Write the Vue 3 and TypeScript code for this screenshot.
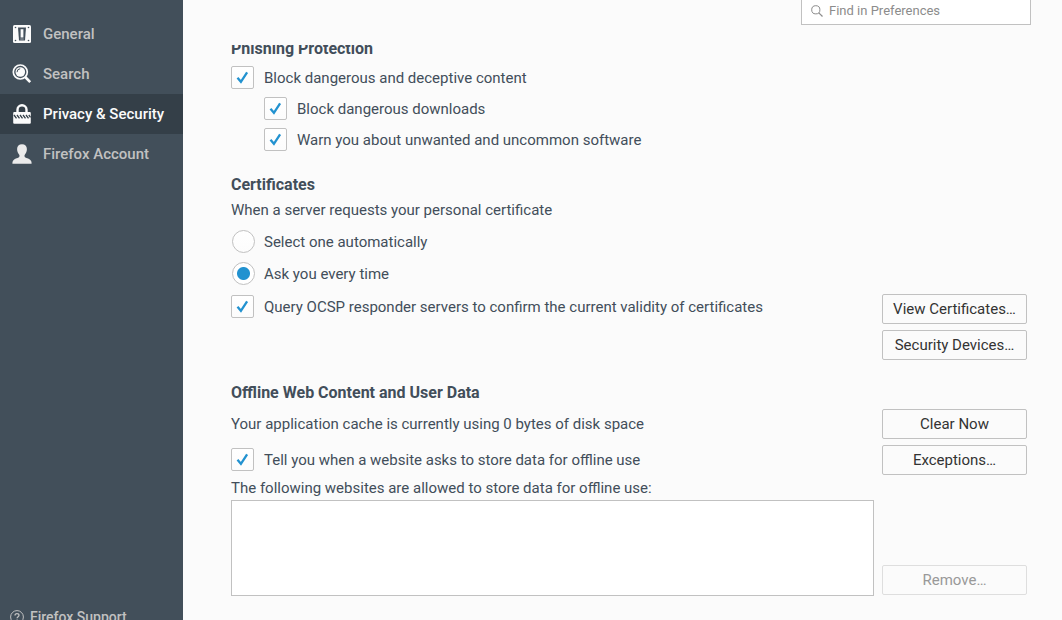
<script setup lang="ts">
import { ref } from 'vue'

const categories = [
  { id: 'general', label: 'General' },
  { id: 'search', label: 'Search' },
  { id: 'privacy', label: 'Privacy & Security' },
  { id: 'account', label: 'Firefox Account' },
]
const current = ref('privacy')
const query = ref('')
const blockContent = ref(true)
const blockDownloads = ref(true)
const warnSoftware = ref(true)
const certificateChoice = ref('ask')
const queryOcsp = ref(true)
const notifyOffline = ref(true)
const offlineSites = ref<string[]>([])
</script>

<template>
  <div class="preferences">
    <aside class="sidebar">
      <nav class="categories" aria-label="Categories">
        <a
          v-for="item in categories"
          :key="item.id"
          :href="'#' + item.id"
          class="category"
          :class="{ selected: current === item.id }"
          @click="current = item.id"
        >
          <svg v-if="item.id === 'general'" class="category-icon" viewBox="0 0 20 20" aria-hidden="true">
            <rect x="1" y="1" width="18" height="18" rx="1.5" fill="#fbfbfb" />
            <path d="M6 3.500h8l-1 13H7z" fill="#424f5a" />
            <path d="M8.600 5.200h2.800v8.300H8.600z" fill="#fbfbfb" />
            <path d="M8.300 14.500h3.400v1H8.300z" fill="#a5abb0" />
            <g fill="#424f5a">
              <circle cx="3.5" cy="3.5" r=".8" /><circle cx="16.5" cy="3.5" r=".8" />
              <circle cx="3.5" cy="16.5" r=".8" /><circle cx="16.5" cy="16.5" r=".8" />
            </g>
          </svg>
          <svg v-else-if="item.id === 'search'" class="category-icon" viewBox="0 0 20 20" aria-hidden="true">
            <circle cx="8.3" cy="8" r="7" fill="none" stroke="#fbfbfb" stroke-width="1.7" />
            <circle cx="8.3" cy="8" r="4.8" fill="#fbfbfb" />
            <path d="M5 8.2a3.6 3.6 0 0 1 3.2-3.5" fill="none" stroke="#424f5a" stroke-width="1" />
            <path d="M13.2 13l5 5.2" stroke="#fbfbfb" stroke-width="2.6" />
          </svg>
          <svg v-else-if="item.id === 'privacy'" class="category-icon" viewBox="0 0 20 20" aria-hidden="true">
            <path d="M5.500 9V5.800a4.500 4.500 0 0 1 9 0V9" fill="none" stroke="#fbfbfb" stroke-width="2.400" />
            <path d="M2.200 8h15.600a1 1 0 0 1 1 1v9.800a1 1 0 0 1-1 1H2.200a1 1 0 0 1-1-1V9a1 1 0 0 1 1-1z" fill="#fbfbfb" />
            <path d="M2 11l2.500 3.400M5 11l2.500 3.400M8 11l2.500 3.400M11 11l2.500 3.400M14 11l2.500 3.400M16.800 11l1.700 2.300" stroke="#343f48" stroke-width="1.300" />
          </svg>
          <svg v-else class="category-icon" viewBox="0 0 20 20" aria-hidden="true">
            <path d="M10 .2c3 0 4.900 1.800 4.900 4.900 0 2.400-.9 4.300-2.100 5.700-.5.700-.3 2 .2 2.500 1.500.9 4.900 1.500 6 3.400.5.800.6 1.700.6 3H.4c0-1.300.1-2.200.6-3 1.100-1.900 4.500-2.500 6-3.400.5-.5.7-1.800.2-2.500-1.200-1.400-2.100-3.300-2.100-5.700C5.100 2 7 .2 10 .2z" fill="#ebebeb" />
          </svg>
          <span>{{ item.label }}</span>
        </a>
      </nav>
      <a class="support" href="#support">
        <svg class="support-icon" viewBox="0 0 14 14" aria-hidden="true">
          <circle cx="7" cy="7" r="6.400" fill="none" stroke="currentColor" />
          <path d="M5 5.500C5 4.300 5.800 3.600 7 3.600s2 .7 2 1.700c0 1.400-1.900 1.400-1.900 3M7.100 9.400v1.300" fill="none" stroke="currentColor" stroke-width="1.300" />
        </svg>
        <span>Firefox Support</span>
      </a>
    </aside>

    <main class="main">
      <header class="toolbar">
        <label class="search">
          <svg class="search-icon" viewBox="0 0 12 12" aria-hidden="true">
            <circle cx="4.800" cy="4.800" r="4.100" fill="none" stroke="#8c8c8c" />
            <path d="M7.800 7.800l3.700 3.700" stroke="#8c8c8c" stroke-width="1.200" />
          </svg>
          <input v-model="query" type="search" placeholder="Find in Preferences" aria-label="Find in Preferences" />
        </label>
      </header>

      <div class="pane">
        <section class="phishing">
          <h2>Phishing Protection</h2>
          <div class="checks">
            <label class="option">
              <span class="box"><input v-model="blockContent" type="checkbox" /><svg viewBox="0 0 23 23" aria-hidden="true"><path d="M6.500 11.800l3.400 4 6.200-9.500" /></svg></span>
              <span>Block dangerous and deceptive content</span>
            </label>
            <label class="option nested">
              <span class="box"><input v-model="blockDownloads" type="checkbox" /><svg viewBox="0 0 23 23" aria-hidden="true"><path d="M6.500 11.800l3.400 4 6.200-9.500" /></svg></span>
              <span>Block dangerous downloads</span>
            </label>
            <label class="option nested">
              <span class="box"><input v-model="warnSoftware" type="checkbox" /><svg viewBox="0 0 23 23" aria-hidden="true"><path d="M6.500 11.800l3.400 4 6.200-9.500" /></svg></span>
              <span>Warn you about unwanted and uncommon software</span>
            </label>
          </div>
        </section>

        <section class="certificates">
          <h2>Certificates</h2>
          <p id="certificate-prompt">When a server requests your personal certificate</p>
          <div class="radios" role="radiogroup" aria-labelledby="certificate-prompt">
            <label class="option radio">
              <input v-model="certificateChoice" type="radio" name="certificate" value="auto" />
              <span>Select one automatically</span>
            </label>
            <label class="option radio">
              <input v-model="certificateChoice" type="radio" name="certificate" value="ask" />
              <span>Ask you every time</span>
            </label>
          </div>
          <div class="columns">
            <label class="option">
              <span class="box"><input v-model="queryOcsp" type="checkbox" /><svg viewBox="0 0 23 23" aria-hidden="true"><path d="M6.500 11.800l3.400 4 6.200-9.500" /></svg></span>
              <span>Query OCSP responder servers to confirm the current validity of certificates</span>
            </label>
            <div class="buttons">
              <button type="button">View Certificates…</button>
              <button type="button">Security Devices…</button>
            </div>
          </div>
        </section>

        <section class="offline">
          <h2>Offline Web Content and User Data</h2>
          <div class="columns">
            <div class="offline-details">
              <p>Your application cache is currently using 0 bytes of disk space</p>
              <label class="option">
                <span class="box"><input v-model="notifyOffline" type="checkbox" /><svg viewBox="0 0 23 23" aria-hidden="true"><path d="M6.500 11.800l3.400 4 6.200-9.500" /></svg></span>
                <span>Tell you when a website asks to store data for offline use</span>
              </label>
              <p id="sites-label" class="sites-label">The following websites are allowed to store data for offline use:</p>
              <ul class="sites" role="listbox" aria-labelledby="sites-label" tabindex="0">
                <li v-for="site in offlineSites" :key="site" role="option">{{ site }}</li>
              </ul>
            </div>
            <div class="buttons">
              <button type="button">Clear Now</button>
              <button type="button">Exceptions…</button>
              <button type="button" class="remove" :disabled="offlineSites.length === 0">Remove…</button>
            </div>
          </div>
        </section>
      </div>
    </main>
  </div>
</template>

<style>
body {
  background: #fbfbfb;
}
</style>

<style scoped>
* {
  box-sizing: border-box;
}

.preferences {
  display: flex;
  height: 100vh;
  overflow: hidden;
  background: #fbfbfb;
  color: #424e5a;
  font-family: Roboto, "Liberation Sans", sans-serif;
  font-size: 15px;
  line-height: 20px;
}

.sidebar {
  display: flex;
  flex: 0 0 183px;
  flex-direction: column;
  justify-content: space-between;
  padding-top: 14px;
  background: #424f5a;
}

.category {
  display: flex;
  align-items: center;
  gap: 11px;
  height: 40px;
  padding-left: 12px;
  color: #c1c1c1;
  font-weight: 500;
  text-decoration: none;
  white-space: nowrap;
}

.category.selected {
  background: #343f48;
  color: #fbfbfb;
}

.category-icon {
  width: 20px;
  height: 20px;
}

.support {
  display: flex;
  align-items: center;
  gap: 6px;
  margin-bottom: -7px;
  padding-left: 10px;
  color: #c1c1c1;
  font-size: 14px;
  font-weight: 500;
  text-decoration: none;
}

.support-icon {
  width: 14px;
  height: 14px;
}

.main {
  display: flex;
  flex: 1;
  flex-direction: column;
  min-width: 0;
}

.toolbar {
  display: flex;
  justify-content: flex-end;
  margin-top: -4px;
  padding: 0 31px 20px 0;
}

.search {
  display: flex;
  align-items: center;
  gap: 6px;
  width: 230px;
  height: 29px;
  padding: 0 9px;
  border: 1px solid #c1c1c1;
  background: #fff;
}

.search-icon {
  flex: none;
  width: 12px;
  height: 12px;
}

.search input {
  flex: 1;
  min-width: 0;
  padding: 0;
  border: 0;
  outline: 0;
  background: none;
  color: #424e5a;
  font: inherit;
  font-size: 13px;
}

.search input::placeholder {
  color: #8c8c8c;
  opacity: 1;
}

.pane {
  flex: 1;
  min-height: 0;
  padding: 0 35px 0 48px;
  overflow: hidden;
}

h2 {
  margin: 0;
  font-size: 16px;
  font-weight: 700;
}

p {
  margin: 0;
}

.phishing {
  margin-top: -6px;
}

.checks {
  display: grid;
  gap: 8px;
  margin-top: 7px;
}

.option {
  display: flex;
  align-items: center;
  gap: 10px;
  height: 23px;
}

.nested {
  margin-left: 33px;
}

.box {
  display: grid;
  flex: none;
  width: 23px;
  height: 23px;
}

.box input,
.box svg {
  grid-area: 1 / 1;
  width: 23px;
  height: 23px;
}

.box svg {
  fill: none;
  stroke: #2292d0;
  stroke-width: 2.3;
  visibility: hidden;
  pointer-events: none;
}

.box input:checked + svg {
  visibility: visible;
}

input[type="checkbox"],
input[type="radio"] {
  appearance: none;
  margin: 0;
  border: 1px solid #c1c1c1;
  border-radius: 2px;
  background: linear-gradient(#fff, #fcfcfc);
}

.radio {
  gap: 9px;
  margin-left: 1px;
}

input[type="radio"] {
  width: 23px;
  height: 23px;
  border-radius: 50%;
}

input[type="radio"]:checked {
  background: radial-gradient(circle, #2292d0 6px, #fff 7px);
}

.certificates {
  margin-top: 24px;
}

.certificates p {
  margin-top: 5px;
}

.radios {
  display: grid;
  gap: 9px;
  margin-top: 10px;
}

.columns {
  display: flex;
  justify-content: space-between;
  gap: 8px;
  margin-top: 9px;
}

.certificates .option {
  margin-top: 1px;
}

.certificates .radio {
  margin-top: 0;
}

.buttons {
  display: flex;
  flex: 0 0 145px;
  flex-direction: column;
  gap: 6px;
}

button {
  height: 30px;
  padding: 0 8px;
  border: 1px solid #c1c1c1;
  border-radius: 2px;
  background: #fbfbfb;
  color: #333;
  font: inherit;
}

button:disabled {
  border-color: #dedede;
  color: #999;
}

.offline {
  margin-top: 23px;
}

.offline .columns {
  margin-top: 6px;
}

.offline-details {
  flex: 1;
  min-width: 0;
  padding-top: 5px;
}

.offline-details .option {
  margin-top: 14px;
}

.sites-label {
  margin-top: 7px;
}

.sites {
  height: 96px;
  margin: 2px 0 0;
  padding: 0;
  overflow: auto;
  border: 1px solid #c1c1c1;
  background: #fff;
  list-style: none;
}

.remove {
  margin-top: auto;
  margin-bottom: 1px;
}
</style>
